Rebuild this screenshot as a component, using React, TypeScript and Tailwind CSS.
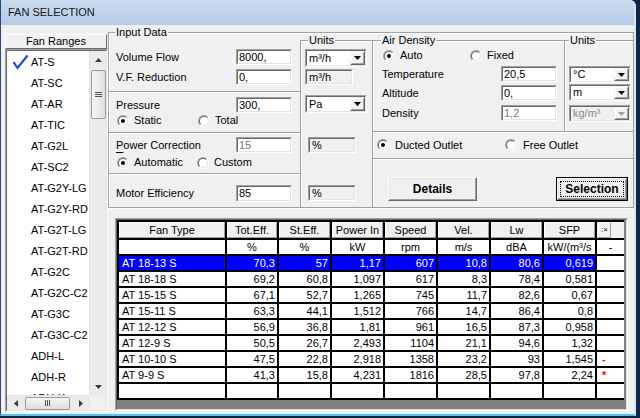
import React from "react";

const OUT_SUNK = "border border-t-[#a0a0a0] border-l-[#a0a0a0] border-r-white border-b-white";
const IN_SUNK = "border border-t-[#696969] border-l-[#696969] border-r-[#e3e3e3] border-b-[#e3e3e3]";
const BOX = "border-t border-l border-[#a0a0a0] shadow-[inset_1px_1px_0_#ffffff]";

type KP = { className?: string; children?: React.ReactNode };

function Sunken({ className = "", inner = "bg-white", children }: KP & { inner?: string }) {
  return (
    <div className={`${OUT_SUNK} shrink-0 ${className}`}>
      <div className={`${IN_SUNK} ${inner} w-full h-full flex items-center overflow-hidden whitespace-nowrap`}>
        {children}
      </div>
    </div>
  );
}

function Field({ className = "", value, disabled = false }: { className?: string; value: string; disabled?: boolean }) {
  return (
    <Sunken className={className} inner="bg-white">
      <span className={disabled ? "pl-[1px] text-[#7a7a7a]" : "pl-[1px]"}>{value}</span>
    </Sunken>
  );
}

function Static({ className = "", value }: { className?: string; value: string }) {
  return (
    <Sunken className={className} inner="bg-[#f0f0f0]">
      <span className="pl-[2px]">{value}</span>
    </Sunken>
  );
}

function Tri({ dir, color = "#000" }: { dir: "up" | "down" | "left" | "right"; color?: string }) {
  if (dir === "down")
    return (
      <svg width="7" height="4" viewBox="0 0 7 4">
        <path d="M0 0H7L3.5 4Z" fill={color} />
      </svg>
    );
  if (dir === "up")
    return (
      <svg width="7" height="4" viewBox="0 0 7 4">
        <path d="M0 4H7L3.5 0Z" fill={color} />
      </svg>
    );
  if (dir === "left")
    return (
      <svg width="4" height="7" viewBox="0 0 4 7">
        <path d="M4 0V7L0 3.5Z" fill={color} />
      </svg>
    );
  return (
    <svg width="4" height="7" viewBox="0 0 4 7">
      <path d="M0 0V7L4 3.5Z" fill={color} />
    </svg>
  );
}

function Combo({ className = "", value, disabled = false }: { className?: string; value: string; disabled?: boolean }) {
  return (
    <Sunken className={className} inner={disabled ? "bg-[#f0f0f0]" : "bg-white"}>
      <span className={disabled ? "flex-1 pl-[2px] text-[#8a8a8a]" : "flex-1 pl-[2px]"}>{value}</span>
      <div className="w-[15px] h-full shrink-0 border border-t-[#f0f0f0] border-l-[#f0f0f0] border-r-[#696969] border-b-[#696969] bg-[#f0f0f0]">
        <div className="w-full h-full border border-t-white border-l-white border-r-[#a0a0a0] border-b-[#a0a0a0] flex items-center justify-center">
          <Tri dir="down" color={disabled ? "#a0a0a0" : "#000"} />
        </div>
      </div>
    </Sunken>
  );
}

function Radio({ checked = false }: { checked?: boolean }) {
  return (
    <span className="w-[12px] h-[12px] shrink-0 rounded-full border border-t-[#a0a0a0] border-l-[#a0a0a0] border-r-white border-b-white flex">
      <span className="flex-1 rounded-full border border-t-[#696969] border-l-[#696969] border-r-[#e3e3e3] border-b-[#e3e3e3] bg-white flex items-center justify-center">
        {checked ? <span className="w-[4px] h-[4px] rounded-full bg-black" /> : null}
      </span>
    </span>
  );
}

function Legend({ className = "", children }: KP) {
  return (
    <span className={`absolute -top-[6px] px-[1px] bg-[#f0f0f0] leading-[11px] whitespace-nowrap ${className}`}>
      {children}
    </span>
  );
}

function Row({ label, labelW = "w-[120px]", pl = "pl-[7px]", h = "h-[16px]", children }: { label: React.ReactNode; labelW?: string; pl?: string; h?: string; children?: React.ReactNode }) {
  return (
    <div className={`flex items-center ${h} ${pl}`}>
      <span className={`${labelW} shrink-0 whitespace-nowrap`}>{label}</span>
      {children}
    </div>
  );
}

function RadioItem({ checked = false, label, w }: { checked?: boolean; label: string; w: string }) {
  return (
    <div className={`flex items-center ${w} shrink-0`}>
      <Radio checked={checked} />
      <span className="ml-[5px] whitespace-nowrap">{label}</span>
    </div>
  );
}

const ITEMS = [
  "AT-S",
  "AT-SC",
  "AT-AR",
  "AT-TIC",
  "AT-G2L",
  "AT-SC2",
  "AT-G2Y-LG",
  "AT-G2Y-RD",
  "AT-G2T-LG",
  "AT-G2T-RD",
  "AT-G2C",
  "AT-G2C-C2",
  "AT-G3C",
  "AT-G3C-C2",
  "ADH-L",
  "ADH-R",
  "ADH-K",
];

const COLW = [
  "w-[108px]",
  "w-[52px]",
  "w-[53px]",
  "w-[53px]",
  "w-[53px]",
  "w-[53px]",
  "w-[53px]",
  "w-[53px]",
  "w-[27px]",
];

const HEAD = ["Fan Type", "Tot.Eff.", "St.Eff.", "Power In", "Speed", "Vel.", "Lw", "SFP"];
const UNITS = ["", "%", "%", "kW", "rpm", "m/s", "dBA", "kW/(m³/s", "-"];

const ROWS = [
  ["AT 18-13 S", "70,3", "57", "1,17", "607", "10,8", "80,6", "0,619", ""],
  ["AT 18-18 S", "69,2", "60,8", "1,097", "617", "8,3", "78,4", "0,581", ""],
  ["AT 15-15 S", "67,1", "52,7", "1,265", "745", "11,7", "82,6", "0,67", ""],
  ["AT 15-11 S", "63,3", "44,1", "1,512", "766", "14,7", "86,4", "0,8", ""],
  ["AT 12-12 S", "56,9", "36,8", "1,81", "961", "16,5", "87,3", "0,958", ""],
  ["AT 12-9 S", "50,5", "26,7", "2,493", "1104", "21,1", "94,6", "1,32", ""],
  ["AT 10-10 S", "47,5", "22,8", "2,918", "1358", "23,2", "93", "1,545", "-"],
  ["AT 9-9 S", "41,3", "15,8", "4,231", "1816", "28,5", "97,8", "2,24", "*"],
  ["", "", "", "", "", "", "", "", ""],
];

function Table() {
  return (
    <div className={`${OUT_SUNK} ml-[7px] mt-[10px] w-[513px] h-[193px] shrink-0`}>
      <div className={`${IN_SUNK} w-full h-full bg-[#808080] overflow-hidden`}>
        <div className="w-[507px] border-t-2 border-l-2 border-black flex flex-col text-[11px]">
          {/* header */}
          <div className="flex h-[18px]">
            {HEAD.map((h, i) => (
              <div key={i} className={`${COLW[i]} h-full shrink-0 border-r-2 border-b-2 border-black`}>
                <div className="w-full h-full bg-[#f0f0f0] border border-t-white border-l-white border-r-[#a0a0a0] border-b-[#a0a0a0] flex items-center justify-center whitespace-nowrap">
                  {h}
                </div>
              </div>
            ))}
            <div className="w-[27px] h-full shrink-0 border-b-2 border-black bg-[#f0f0f0] flex pl-[1px]">
              <div className="w-[13px] h-full bg-[#f0f0f0] border border-t-white border-l-white border-r-[#a0a0a0] border-b-[#a0a0a0] flex items-center justify-center text-[8px]">
                :×
              </div>
            </div>
          </div>
          {/* units */}
          <div className="flex h-[16px]">
            {UNITS.map((u, i) => (
              <div
                key={i}
                className={`${COLW[i]} h-full shrink-0 border-b-2 border-black bg-white flex items-center justify-center whitespace-nowrap ${i < 8 ? "border-r-2" : ""}`}
              >
                {u}
              </div>
            ))}
          </div>
          {ROWS.map((r, ri) => {
            const sel = ri === 0;
            return (
              <div key={ri} className="flex h-[16px]">
                {r.map((c, i) => {
                  const bg = sel && i < 8 ? "bg-[#0000ff] text-white" : "bg-white";
                  const align =
                    i === 0 ? "pl-[3px]" : i === 8 ? "pl-[5px] text-[#ff0000] font-bold" : "justify-end pr-[2px]";
                  return (
                    <div
                      key={i}
                      className={`${COLW[i]} h-full shrink-0 border-b-2 border-black flex items-center whitespace-nowrap ${i < 8 ? "border-r-2" : ""} ${bg} ${align}`}
                    >
                      {c}
                    </div>
                  );
                })}
              </div>
            );
          })}
        </div>
      </div>
    </div>
  );
}

function ListPanel() {
  return (
    <div className="w-[107px] shrink-0 flex flex-col pt-[9px] pl-[4px] pb-[2px]">
      <div className="w-[102px] h-[15px] shrink-0 border border-t-white border-l-white border-r-[#696969] border-b-[#696969] bg-[#f0f0f0] flex items-center justify-center">
        Fan Ranges
      </div>
      <div className={`${OUT_SUNK} w-[103px] flex-1 min-h-0`}>
        <div className={`${IN_SUNK} w-full h-full flex flex-col bg-white`}>
          <div className="flex-1 min-h-0 flex">
            <div className="flex-1 relative overflow-hidden pt-[1px]">
              {ITEMS.map((it, i) => (
                <div key={i} className="relative h-[21px] flex items-center pl-[24px] whitespace-nowrap">
                  {i === 0 ? (
                    <svg className="absolute left-[5px] top-[2px]" width="17" height="16" viewBox="0 0 17 16">
                      <polyline points="1.5,8 5.5,14 15.5,1.5" fill="none" stroke="#1f4fcf" strokeWidth="2.2" strokeLinejoin="miter" />
                    </svg>
                  ) : null}
                  {it}
                </div>
              ))}
            </div>
            <div className="w-[17px] h-full shrink-0 bg-[#ebebeb] border-l border-l-[#e2e2e2] flex flex-col items-center">
              <div className="h-[17px] w-full flex items-center justify-center shrink-0">
                <Tri dir="up" color="#3c3c3c" />
              </div>
              <div className="mt-[2px] w-[15px] h-[49px] shrink-0 rounded-[2px] border border-[#9c9c9c] bg-linear-to-r from-[#f6f6f6] to-[#dedede] flex flex-col items-center justify-center gap-[1px]">
                <div className="w-[7px] h-[1px] bg-[#555]" />
                <div className="w-[7px] h-[1px] bg-[#555]" />
                <div className="w-[7px] h-[1px] bg-[#555]" />
              </div>
              <div className="flex-1" />
              <div className="h-[17px] w-full flex items-center justify-center shrink-0">
                <Tri dir="down" color="#3c3c3c" />
              </div>
            </div>
          </div>
          <div className="h-[15px] flex shrink-0">
            <div className="flex-1 flex items-center bg-[#ebebeb] border-t border-t-[#e2e2e2]">
              <div className="w-[17px] h-full flex items-center justify-center shrink-0">
                <Tri dir="left" color="#3c3c3c" />
              </div>
              <div className="ml-[1px] w-[45px] h-[13px] shrink-0 rounded-[2px] border border-[#9c9c9c] bg-linear-to-b from-[#f6f6f6] to-[#dedede] flex items-center justify-center gap-[1px]">
                <div className="w-[1px] h-[6px] bg-[#555]" />
                <div className="w-[1px] h-[6px] bg-[#555]" />
                <div className="w-[1px] h-[6px] bg-[#555]" />
              </div>
              <div className="flex-1" />
              <div className="w-[17px] h-full flex items-center justify-center shrink-0">
                <Tri dir="right" color="#3c3c3c" />
              </div>
            </div>
            <div className="w-[17px] h-full bg-[#f0f0f0] shrink-0" />
          </div>
        </div>
      </div>
    </div>
  );
}

function Button({ label, def = false, w }: { label: string; def?: boolean; w: string }) {
  if (def)
    return (
      <div className={`${w} h-[24px] shrink-0 border border-black`}>
        <div className="w-full h-full border border-t-white border-l-white border-r-[#696969] border-b-[#696969]">
          <div className="w-full h-full border border-t-[#e3e3e3] border-l-[#e3e3e3] border-r-[#a0a0a0] border-b-[#a0a0a0] p-[1px]">
            <div className="w-full h-full border border-dotted border-black flex items-center justify-center font-bold text-[12px]">
              {label}
            </div>
          </div>
        </div>
      </div>
    );
  return (
    <div className={`${w} h-[24px] shrink-0 border border-t-white border-l-white border-r-[#696969] border-b-[#696969]`}>
      <div className="w-full h-full border border-t-[#e3e3e3] border-l-[#e3e3e3] border-r-[#a0a0a0] border-b-[#a0a0a0] flex items-center justify-center font-bold text-[12px]">
        {label}
      </div>
    </div>
  );
}

function TopGroup() {
  return (
    <div className="relative w-[526px] h-[176px] shrink-0 border border-[#a0a0a0] shadow-[inset_1px_1px_0_#ffffff,1px_1px_0_#ffffff] flex">
      <Legend className="left-[6px]">Input Data</Legend>
      {/* Column A */}
      <div className="w-[191px] shrink-0 flex flex-col">
        <div className="h-[58px] shrink-0 pt-[16px] flex flex-col gap-[4px]">
          <Row label="Volume Flow">
            <Field className="w-[56px] h-[16px]" value="8000," />
          </Row>
          <Row label="V.F. Reduction">
            <Field className="w-[56px] h-[16px]" value="0," />
          </Row>
        </div>
        <div className={`${BOX} -ml-px h-[41px] shrink-0 pt-[5px]`}>
          <Row label="Pressure">
            <Field className="w-[56px] h-[16px]" value="300," />
          </Row>
          <div className="mt-[1px] h-[13px] flex items-center pl-[8px]">
            <RadioItem checked label="Static" w="w-[81px]" />
            <RadioItem label="Total" w="w-[60px]" />
          </div>
        </div>
        <div className={`${BOX} -ml-px h-[41px] shrink-0 pt-[4px]`}>
          <Row
            label={
              <span>
                <span className="underline underline-offset-[3px]">P</span>ower Correction
              </span>
            }
          >
            <Field className="w-[56px] h-[16px]" value="15" disabled />
          </Row>
          <div className="mt-[3px] h-[13px] flex items-center pl-[8px]">
            <RadioItem checked label="Automatic" w="w-[80px]" />
            <RadioItem label="Custom" w="w-[60px]" />
          </div>
        </div>
        <div className={`${BOX} -ml-px flex-1 pt-[11px]`}>
          <Row label="Motor Efficiency" h="h-[17px]">
            <Field className="w-[56px] h-[17px]" value="85" />
          </Row>
        </div>
      </div>
      {/* Column B */}
      <div className="w-[72px] shrink-0 pt-[7px] flex flex-col">
        <div className={`${BOX} relative flex-1 flex flex-col items-start`}>
          <Legend className="left-[7px]">Units</Legend>
          <Combo className="mt-[8px] ml-[4px] w-[62px] h-[18px]" value="m³/h" />
          <Static className="mt-[2px] ml-[4px] w-[48px] h-[16px]" value="m³/h" />
          <Combo className="mt-[10px] ml-[4px] w-[62px] h-[18px]" value="Pa" />
          <Static className="mt-[24px] ml-[7px] w-[48px] h-[16px]" value="%" />
          <Static className="mt-[32px] ml-[7px] w-[48px] h-[16px]" value="%" />
        </div>
      </div>
      {/* Column C */}
      <div className="flex-1 flex flex-col pt-[7px]">
        <div className="h-[91px] shrink-0 flex">
          <div className={`${BOX} relative w-[192px] shrink-0 flex flex-col`}>
            <Legend className="left-[8px]">Air Density</Legend>
            <div className="mt-[8px] h-[13px] flex items-center pl-[10px]">
              <RadioItem checked label="Auto" w="w-[87px]" />
              <RadioItem label="Fixed" w="w-[60px]" />
            </div>
            <div className="mt-[4px]">
              <Row label="Temperature" labelW="w-[119px]" pl="pl-[9px]">
                <Field className="w-[56px] h-[16px]" value="20,5" />
              </Row>
            </div>
            <div className="mt-[3px]">
              <Row label="Altitude" labelW="w-[119px]" pl="pl-[9px]">
                <Field className="w-[56px] h-[16px]" value="0," />
              </Row>
            </div>
            <div className="mt-[4px]">
              <Row label="Density" labelW="w-[119px]" pl="pl-[9px]">
                <Field className="w-[56px] h-[16px]" value="1,2" disabled />
              </Row>
            </div>
          </div>
          <div className={`${BOX} relative flex-1 flex flex-col items-start`}>
            <Legend className="left-[4px]">Units</Legend>
            <Combo className="mt-[25px] ml-[4px] w-[62px] h-[17px]" value="°C" />
            <Combo className="mt-[1px] ml-[4px] w-[62px] h-[17px]" value="m" />
            <Combo className="mt-[4px] ml-[4px] w-[62px] h-[17px]" value="kg/m³" disabled />
          </div>
        </div>
        <div className={`${BOX} h-[27px] shrink-0 flex items-center pl-[4px]`}>
          <div className="flex items-center w-[128px] shrink-0">
            <Radio checked />
            <span className="ml-[6px]">Ducted Outlet</span>
          </div>
          <div className="flex items-center">
            <Radio />
            <span className="ml-[6px]">Free Outlet</span>
          </div>
        </div>
        <div className={`${BOX} flex-1 flex items-start pt-[18px] pl-[15px] pr-[5px]`}>
          <Button label="Details" w="w-[89px]" />
          <div className="flex-1" />
          <Button label="Selection" w="w-[72px]" def />
        </div>
      </div>
    </div>
  );
}

export default function App() {
  return (
    <div className="w-[640px] h-[418px] bg-[#0f2747] overflow-hidden font-['Liberation_Sans',Arial,sans-serif] text-[11px] text-black leading-none">
      <div className="w-[636px] h-[416px] flex flex-col bg-[#f0f0f0] rounded-tr-[6px] overflow-hidden border-l border-l-[#2a4870] border-r-2 border-r-[#dde7f3] border-b-2 border-b-[#56c2ec]">
        <div className="h-[25px] shrink-0 flex items-center pl-[7px] bg-linear-to-b from-[#cadaef] to-[#b5cbe6] text-[#151515]">
          FAN SELECTION
        </div>
        <div className="flex flex-1 min-h-0">
          <ListPanel />
          <div className="flex-1 flex flex-col pt-[7px]">
            <TopGroup />
            <Table />
          </div>
        </div>
      </div>
    </div>
  );
}
